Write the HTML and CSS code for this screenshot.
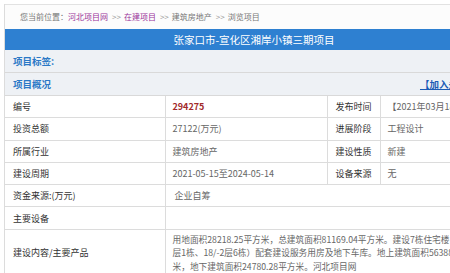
FILE: index.html
```html
<!DOCTYPE html>
<html lang="zh">
<head>
<meta charset="utf-8">
<title>张家口市-宣化区湘岸小镇三期项目</title>
<link rel="stylesheet" href="styles.css">
</head>
<body>
<div class="page">
  <div class="crumb">
    您当前位置：<a class="link" href="#">河北项目网</a><span class="sep">&gt;&gt;</span><a class="link" href="#">在建项目</a><span class="sep">&gt;&gt;</span>建筑房地产<span class="sep">&gt;&gt;</span>浏览项目
  </div>
  <div class="titlebar">张家口市-宣化区湘岸小镇三期项目</div>
  <div class="section">项目标签:</div>
  <div class="section section-row">
    <span>项目概况</span>
    <a class="join" href="#">【加入关注】</a>
  </div>
  <table class="info">
    <colgroup>
      <col class="c1"><col class="c2"><col class="c3"><col class="c4">
    </colgroup>
    <tr>
      <td class="lab">编号</td>
      <td class="val num">294275</td>
      <td class="lab2">发布时间</td>
      <td class="val">【2021年03月18日】</td>
    </tr>
    <tr>
      <td class="lab">投资总额</td>
      <td class="val">27122(万元)</td>
      <td class="lab2">进展阶段</td>
      <td class="val">工程设计</td>
    </tr>
    <tr>
      <td class="lab">所属行业</td>
      <td class="val">建筑房地产</td>
      <td class="lab2">建设性质</td>
      <td class="val">新建</td>
    </tr>
    <tr>
      <td class="lab">建设周期</td>
      <td class="val">2021-05-15至2024-05-14</td>
      <td class="lab2">设备来源</td>
      <td class="val">无</td>
    </tr>
    <tr>
      <td class="lab">资金来源:(万元)</td>
      <td class="val" colspan="3">&nbsp;企业自筹</td>
    </tr>
    <tr>
      <td class="lab">主要设备</td>
      <td class="val" colspan="3"></td>
    </tr>
    <tr class="tall">
      <td class="lab">建设内容/主要产品</td>
      <td class="val multi" colspan="3">用地面积28218.25平方米，总建筑面积81169.04平方米。建设7栋住宅楼（26/-2<br>层1栋、18/-2层6栋）配套建设服务用房及地下车库。地上建筑面积56388.72平方<br>米，地下建筑面积24780.28平方米。河北项目网</td>
    </tr>
  </table>
</div>
</body>
</html>
```

FILE: styles.css
```css
html, body {
  margin: 0;
  padding: 0;
  overflow: hidden;
  background: #ffffff;
}

body {
  font-family: "Noto Sans CJK SC", "Noto Sans", sans-serif;
  color: #333;
}

.page {
  margin: 4px 0 0 4px;
  width: 498px;
  border-left: 1px solid #dcdcdc;
}

.crumb {
  height: 24px;
  line-height: 24px;
  border-top: 1px solid #e2e2e2;
  background: #fcfcfc;
  padding-left: 15px;
  font-size: 8px;
  color: #777;
  white-space: nowrap;
}

.crumb .link {
  color: #993399;
  text-decoration: none;
}

.crumb .sep {
  color: #999;
  margin: 0 3px 0 4px;
}

.titlebar {
  height: 21px;
  line-height: 21px;
  background: #2e80d1;
  color: #fff;
  text-align: center;
  font-size: 10.5px;
  white-space: nowrap;
}

.section {
  height: 22px;
  line-height: 22px;
  border-bottom: 1px solid #d9d9d9;
  background: #eef1f5;
  color: #2a78c6;
  font-weight: bold;
  font-size: 9.5px;
  padding-left: 8px;
}

.section-row {
  display: flex;
  align-items: center;
  padding-right: 26px;
}

.join {
  margin-left: auto;
  color: #1b5bb5;
  text-decoration: underline;
  font-size: 9.5px;
  white-space: nowrap;
}

.info {
  border-collapse: collapse;
  table-layout: fixed;
  width: 498px;
  font-size: 9px;
}

.info .c1 { width: 160px; }
.info .c2 { width: 162px; }
.info .c3 { width: 53px; }
.info .c4 { width: 123px; }

.info td {
  height: 21.3px;
  padding: 0;
  border-bottom: 1px solid #dcdcdc;
  border-left: 1px solid #dcdcdc;
  white-space: nowrap;
  overflow: hidden;
  vertical-align: middle;
}

.info td:first-child {
  border-left: none;
}

.lab {
  padding-left: 8px !important;
  color: #333;
}

.lab2 {
  text-align: center;
  color: #333;
}

.val {
  padding-left: 7px !important;
  color: #666;
}

.num {
  color: #a22a2a;
  font-weight: bold;
}

.tall td {
  height: 42px;
}

.multi {
  font-size: 8.7px;
  line-height: 13.5px;
  padding-top: 2px !important;
  padding-bottom: 2px !important;
}
```
